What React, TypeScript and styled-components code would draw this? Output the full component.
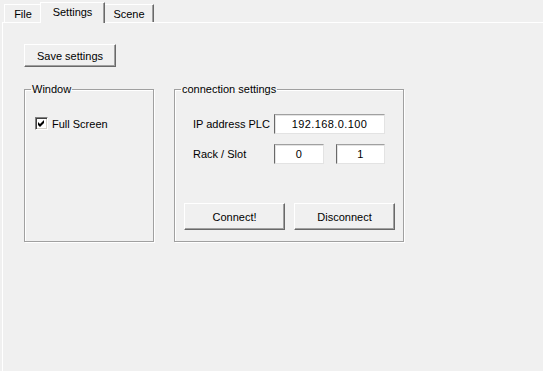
import React from "react";
import styled, { createGlobalStyle } from "styled-components";

const GlobalStyle = createGlobalStyle`
  html, body {
    margin: 0;
    padding: 0;
    height: 100%;
    background: #f0f0f0;
  }
  body {
    font-family: "Liberation Sans", Arial, sans-serif;
    font-size: 11px;
    color: #000;
  }
`;

const Frame = styled.div`
  width: 543px;
  height: 371px;
  display: flex;
  flex-direction: column;
  overflow: hidden;
`;

const TabStrip = styled.div`
  display: flex;
  align-items: flex-end;
  height: 22px;
  padding-left: 4px;
`;

const Tab = styled.div<{ $active?: boolean; $width: number }>`
  box-sizing: border-box;
  width: ${(p) => p.$width}px;
  height: ${(p) => (p.$active ? 21 : 18)}px;
  margin: ${(p) => (p.$active ? "0 -1px -1px -2px" : "0")};
  display: flex;
  align-items: center;
  justify-content: center;
  padding-bottom: ${(p) => (p.$active ? 2 : 0)}px;
  background: #f0f0f0;
  border-top: 1px solid #fff;
  border-left: 1px solid #fff;
  border-right: 1px solid #696969;
  box-shadow: inset -1px 0 0 #a0a0a0;
  position: relative;
  z-index: ${(p) => (p.$active ? 2 : 1)};
`;

const Page = styled.div`
  flex: 1;
  margin-left: 2px;
  border-top: 1px solid #fff;
  border-left: 1px solid #fff;
  padding: 21px 0 0 21px;
`;

const Button = styled.button<{ $width: number; $height: number }>`
  box-sizing: border-box;
  width: ${(p) => p.$width}px;
  height: ${(p) => p.$height}px;
  font: inherit;
  color: #000;
  background: #f0f0f0;
  border: 1px solid;
  border-color: #fff #696969 #696969 #fff;
  box-shadow: inset -1px -1px 0 #a0a0a0;
  padding: 0;
`;

const GroupRow = styled.div`
  display: flex;
  gap: 20px;
  margin-top: 16px;
`;

const GroupBox = styled.fieldset<{ $width: number }>`
  box-sizing: border-box;
  width: ${(p) => p.$width}px;
  height: 159px;
  margin: 0;
  padding: 0;
  border: 1px solid #a0a0a0;
  box-shadow: 1px 1px 0 #fff, inset 1px 1px 0 #fff;
  display: flex;
  flex-direction: column;
`;

const Legend = styled.legend`
  margin-left: 6px;
  padding: 0 1px;
  line-height: 13px;
`;

const CheckRow = styled.label`
  display: flex;
  align-items: center;
  gap: 4px;
  margin: 21px 0 0 10px;
`;

const CheckBox = styled.span`
  box-sizing: border-box;
  width: 13px;
  height: 13px;
  background: #fff;
  border: 1px solid;
  border-color: #808080 #fff #fff #808080;
  box-shadow: inset 1px 1px 0 #404040, inset -1px -1px 0 #d4d0c8;
  display: flex;
  align-items: center;
  justify-content: center;
`;

const FormGrid = styled.div`
  display: grid;
  grid-template-columns: 81px 50px 12px 49px;
  grid-auto-rows: 20px;
  row-gap: 10px;
  align-items: center;
  margin: 18px 0 0 18px;
`;

const FieldLabel = styled.span`
  grid-column: 1;
`;

const Input = styled.div<{ $span?: boolean; $col: number }>`
  box-sizing: border-box;
  grid-column: ${(p) => (p.$span ? "2 / 5" : `${p.$col}`)};
  height: 20px;
  background: #fff;
  border: 1px solid;
  border-color: #a0a0a0 #e3e3e3 #e3e3e3 #696969;
  box-shadow: inset 1px 1px 0 #e3e3e3;
  display: flex;
  align-items: center;
  justify-content: center;
  letter-spacing: 0.4px;
`;

const ButtonRow = styled.div`
  display: flex;
  gap: 9px;
  margin: 39px 0 0 9px;
`;

const App: React.FC = (): React.ReactElement => {
  return (
    <>
      <GlobalStyle />
      <Frame>
        <TabStrip>
          <Tab $width={38}>File</Tab>
          <Tab $width={65} $active>
            Settings
          </Tab>
          <Tab $width={50}>Scene</Tab>
        </TabStrip>
        <Page>
          <Button $width={92} $height={23}>
            Save settings
          </Button>
          <GroupRow>
            <GroupBox $width={130}>
              <Legend>Window</Legend>
              <CheckRow>
                <CheckBox>
                  <svg width="9" height="9" viewBox="0 0 9 9">
                    <path d="M1 3 L3 5 L7 1 L7 4 L3 8 L1 6 Z" fill="#000" />
                  </svg>
                </CheckBox>
                Full Screen
              </CheckRow>
            </GroupBox>
            <GroupBox $width={230}>
              <Legend>connection settings</Legend>
              <FormGrid>
                <FieldLabel>IP address PLC</FieldLabel>
                <Input $col={2} $span>
                  192.168.0.100
                </Input>
                <FieldLabel>Rack / Slot</FieldLabel>
                <Input $col={2}>0</Input>
                <Input $col={4}>1</Input>
              </FormGrid>
              <ButtonRow>
                <Button $width={101} $height={27}>
                  Connect!
                </Button>
                <Button $width={101} $height={27}>
                  Disconnect
                </Button>
              </ButtonRow>
            </GroupBox>
          </GroupRow>
        </Page>
      </Frame>
    </>
  );
};

export default App;
